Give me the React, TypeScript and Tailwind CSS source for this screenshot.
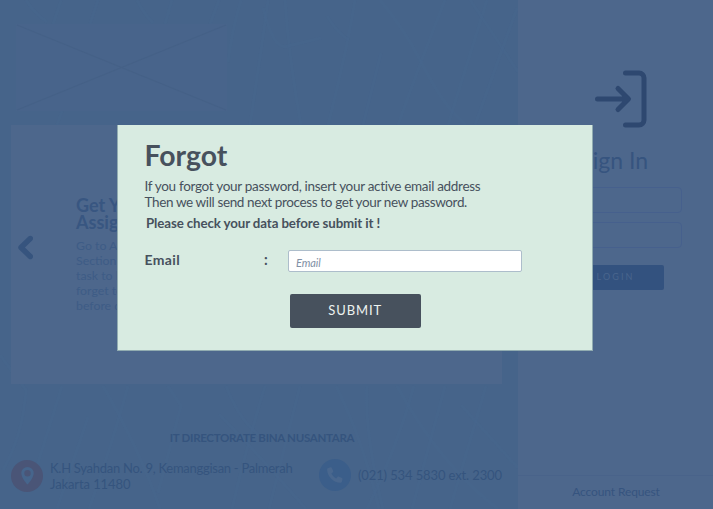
import React from "react";

const strands = [
  "M61 0 Q56 16 53 24", "M98 0 L90 24", "M26 0 Q35 14 47 22", "M137 0 Q144 14 153 23",
  "M172 0 L165 24", "M219 0 L210 24", "M241 0 Q232 30 228 62", "M268 0 Q263 38 250 125",
  "M285 0 Q289 60 301 125", "M263 8 Q274 52 288 46 L321 38", "M355 0 Q347 50 328 125",
  "M327 16 Q338 34 349 40", "M380 0 Q405 30 420 60 T450 109 L466 125", "M445 0 Q425 50 398 125",
  "M381 53 L363 125", "M487 0 L448 125", "M470 0 Q492 32 518 72", "M517 8 L475 125",
  "M0 355 Q14 374 26 390 Q23 435 3 470", "M62 386 L32 482",
  "M88 417 L57 509", "M128 386 Q112 445 89 509", "M103 386 Q140 450 160 509",
  "M168 386 L181 406 L158 493", "M226 386 Q239 420 260 436", "M265 386 Q245 452 232 509",
  "M300 386 L269 509", "M336 386 Q363 440 379 509", "M367 386 Q364 430 383 509",
  "M414 386 Q397 448 367 509", "M445 386 L412 509", "M461 405 L518 468", "M486 386 L450 509",
  "M397 386 Q440 465 498 509", "M219 414 Q259 455 306 509", "M62 111 L57 125",
];

function BackgroundStrands() {
  return (
    <svg className="absolute inset-0 h-full w-full" viewBox="0 0 518 509" fill="none" stroke="#49678e" strokeOpacity=".28" strokeWidth="3">
      {strands.map((d) => <path key={d} d={d} />)}
    </svg>
  );
}

function Carousel() {
  return (
    <section className="ml-[11px] flex h-[259px] w-[491px] bg-[#4d678c]">
      <button className="ml-[7px] mt-[110px] h-[25px] w-[15px]" aria-label="Previous">
        <svg width="15" height="25" viewBox="0 0 15 25" fill="none" stroke="#36547e" strokeWidth="5.4" strokeLinecap="round" strokeLinejoin="round"><path d="M12.3 3.5 3 12.5l9.3 9" /></svg>
      </button>
      <article className="ml-[43px] mt-[72px] whitespace-nowrap text-[#385681]">
        <h2 className="text-[18px] font-bold leading-[16.5px]">Get Yo<br />Assig</h2>
        <p className="mt-[8px] text-[12.3px] leading-[15px] text-[#3e5c86]">Go to As<br />Section<br />task to b<br />forget to<br />before d</p>
      </article>
    </section>
  );
}

function Contact() {
  return (
    <footer className="mt-[46px] px-[11px] text-[#35547e]">
      <h3 className="pl-[6px] text-center text-[11.5px] font-bold leading-4 tracking-[-0.3px]">IT DIRECTORATE BINA NUSANTARA</h3>
      <div className="mt-[13px] flex items-start text-[13px] leading-4">
        <span className="mt-[1px] flex size-8 shrink-0 items-center justify-center rounded-full bg-[#4a5577]">
          <svg width="13" height="18" viewBox="0 0 13 18" fill="#46658c" fillRule="evenodd"><path d="M6.5 0A6.2 6.2 0 0 0 .3 6.2C.3 10.8 6.5 17.6 6.5 17.6s6.2-6.8 6.2-11.4A6.2 6.2 0 0 0 6.5 0Zm0 3a3.2 3.2 0 1 1 0 6.4 3.2 3.2 0 0 1 0-6.4Z" /></svg>
        </span>
        <address className="ml-[7px] mt-[1px] w-[269px] whitespace-nowrap not-italic"><span className="tracking-[-0.27px]">K.H Syahdan No. 9, Kemanggisan - Palmerah</span><br /><span className="tracking-[-0.1px]">Jakarta 11480</span></address>
        <span className="flex size-8 shrink-0 items-center justify-center rounded-full bg-[#3b5e8a]">
          <svg width="16" height="17" viewBox="0 0 16 17" fill="#49678e"><path d="M1.2.9 3.8.3c.5-.1.9.1 1.1.6l1.3 3.2c.2.5.1.9-.3 1.2L4.4 6.6c1 2.1 2.6 3.8 4.8 4.8l1.3-1.6c.3-.4.8-.5 1.2-.3l3.2 1.4c.5.2.7.6.6 1.1l-.6 2.7c-.2.7-.7 1.1-1.4 1.1C6.7 15.8.1 9.6.1 2.3c0-.7.4-1.2 1.1-1.4Z" /></svg>
        </span>
        <span className="ml-[7px] mt-[8px] whitespace-nowrap tracking-[-0.12px]">(021) 534 5830 ext. 2300</span>
      </div>
    </footer>
  );
}

function SignIn() {
  return (
    <aside className="flex h-full w-[195px] flex-col bg-[#4d678c] text-[#36547f]">
      <svg className="ml-[76px] mt-[70px] shrink-0" width="54" height="59" viewBox="0 0 54 59" fill="none" stroke="#2e4870" strokeWidth="5" strokeLinecap="round" strokeLinejoin="round">
        <path d="M31.5 3h13.5a5 5 0 0 1 5 5v42a5 5 0 0 1-5 5H31.5M3.5 29h30M24 18.5 34.5 29 24 39.5" />
        <path d="m31 27 2.5 2-2.5 2Z" fill="#2e4870" />
      </svg>
      <h2 className="mt-[15px] pr-[65px] text-right text-[23px] leading-8">Sign In</h2>
      <div className="ml-[31px] mt-[11px] h-[26px] w-[133px] rounded border border-[#46608d]" />
      <div className="ml-[31px] mt-[9px] h-[26px] w-[133px] rounded border border-[#46608d]" />
      <button className="ml-[49px] mt-[17px] flex h-[25px] w-[97px] items-center justify-center rounded-[2px] bg-[#33527f] pb-[1px] text-[9px] tracking-[2.1px] text-[#49658d]">LOGIN</button>
      <div className="mt-auto h-[34px] border-t border-[#49638a] pl-px text-center text-[12px] leading-[32px] tracking-[-0.12px]">Account Request</div>
    </aside>
  );
}

function ForgotDialog() {
  return (
    <form className="absolute left-[117px] top-[125px] h-[226px] w-[476px] border-x border-b border-[#91acb0] bg-[#d8ebe1] pl-[26.5px] text-[#47515d]">
      <h1 className="pt-[12px] text-[28.4px] font-bold leading-9">Forgot</h1>
      <p className="mt-[5px] whitespace-nowrap text-[13.5px] leading-4"><span className="tracking-[-0.3px]">If you forgot your password, insert your active email address</span><br /><span className="tracking-[-0.37px]">Then we will send next process to get your new password.</span></p>
      <p className="ml-[1.5px] mt-[5px] text-[13.3px] font-bold leading-4 tracking-[-0.11px]">Please check your data before submit it !</p>
      <div className="mt-[19px] flex h-[22px] items-center">
        <label htmlFor="email" className="w-[119.5px] pb-[4px] text-[14px] font-bold tracking-[0.35px]">Email</label>
        <span className="w-[24px] pb-[3px] text-[14.5px] font-bold">:</span>
        <input id="email" placeholder="Email" className="h-[22px] w-[234px] rounded-[2px] border border-[#adbdcb] bg-white px-[7px] pt-[3px] text-[11px] italic tracking-[-0.1px] placeholder:text-[#8190a5]" />
      </div>
      <button className="ml-[145.5px] mt-[22px] flex h-[34px] w-[130.5px] items-center justify-center rounded-[2px] bg-[#47515d] pb-px text-[13px] tracking-[0.9px] text-[#edf3f0]">SUBMIT</button>
    </form>
  );
}

export default function App() {
  return (
    <div className="relative flex h-[509px] w-[713px] overflow-hidden bg-[#46648a] font-['Lato',sans-serif]">
      <main className="relative w-[518px]">
        <BackgroundStrands />
        <div className="relative pt-6">
          <svg className="mb-[14px] ml-4 block" width="211" height="87" viewBox="0 0 211 87"><path fill="#48648b" d="M0 0h211v87H0z" /><path d="m1 1 209 85M210 1 1 86" stroke="#456187" strokeWidth="1.2" /></svg>
          <Carousel />
          <Contact />
        </div>
      </main>
      <SignIn />
      <ForgotDialog />
    </div>
  );
}
